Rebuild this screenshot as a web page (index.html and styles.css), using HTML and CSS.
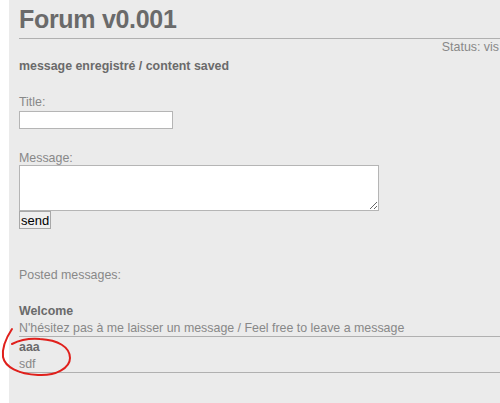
FILE: index.html
```html
<!DOCTYPE html>
<html>
<head>
<meta charset="utf-8">
<title>Forum v0.001</title>
<link rel="stylesheet" href="styles.css">
</head>
<body>

<div id="wrap">

	<!-- start:header -->
	<h1>Forum v0.001</h1>
	<div class="status">Status: vis</div>
	<!-- end:header -->

	<p class="notice">message enregistré / content saved</p>

	<!-- start:form -->
	<form class="post_form">
		<label for="title">Title:</label>
		<input type="text" id="title" class="title_input">
		<label for="message" class="msg_label">Message:</label>
		<textarea id="message" class="msg_input"></textarea>
		<button type="button" class="send">send</button>
	</form>
	<!-- end:form -->

	<p class="posted">Posted messages:</p>

	<div class="messages">
		<div class="message">
			<div class="msg_title">Welcome</div>
			<div class="msg_body">N'hésitez pas à me laisser un message / Feel free to leave a message</div>
		</div>
		<div class="message">
			<div class="msg_title">aaa</div>
			<div class="msg_body">sdf</div>
		</div>
	</div>

</div>

<!-- hand drawn mark -->
<svg class="scribble" width="80" height="60" viewBox="0 0 80 60">
	<path d="M12 4 C6 13 2 23 3 32 C5 42 18 49 38 50 C56 51 70 43 70 33 C70 22 58 15 40 14 C28 13 18 16 12 19" fill="none" stroke="#e0201c" stroke-width="2" stroke-linecap="round"/>
</svg>

</body>
</html>
```

FILE: styles.css
```css
html, body {margin: 0; padding: 0; overflow: hidden;}
body {background: #fff; font: 12.4px "Liberation Sans", Arial, sans-serif; color: #888;}
/* ---------- ---------- STRUCTURE ---------- ---------- */
#wrap {background: #ebebeb; margin-left: 9px; padding: 0 0 40px 10px; width: 491px; min-height: 403px; box-sizing: border-box;}
/* ---------- ---------- HEADER ---------- ---------- */
h1 {margin: 0; padding-top: 1px; font-size: 25px; line-height: 37px; color: #6a6a6a; border-bottom: 1px solid #b0b0b0; letter-spacing: -.3px;}
.status {text-align: right; line-height: 16px; padding-right: 1px;}
.notice {margin: 3px 0 0 0; font-weight: bold; color: #6a6a6a; line-height: 16px;}
/* ---------- ---------- FORM ---------- ---------- */
.post_form {display: flex; flex-direction: column; align-items: flex-start; margin-top: 21px;}
.post_form label {line-height: 15px;}
.title_input {width: 154px; height: 18px; margin: 1px 0 0 0; padding: 0; border: 1px solid #b5b5b5; background: #fff; box-sizing: border-box;}
.post_form .msg_label {margin-top: 22px; line-height: 14px;}
.msg_input {width: 360px; height: 46px; margin: 0; padding: 0; border: 1px solid #b5b5b5; background: #fff; resize: both; box-sizing: border-box;}
.send {margin: 0; padding: 0 1px; height: 18px; font: 13px "Liberation Sans", Arial, sans-serif; color: #000; background: #efefef; border: 1px solid #a8a8a8; border-radius: 0;}
/* ---------- ---------- MESSAGES ---------- ---------- */
.posted {margin: 38px 0 0 0; line-height: 16px;}
.messages {margin-top: 18px;}
.message {border-bottom: 1px solid #b0b0b0; padding-top: 1px;}
.msg_title {font-weight: bold; color: #6a6a6a; line-height: 18px;}
.msg_body {line-height: 16px;}
/* ---------- ---------- OVERLAY ---------- ---------- */
.scribble {position: absolute; left: 0; top: 325px;}
```
